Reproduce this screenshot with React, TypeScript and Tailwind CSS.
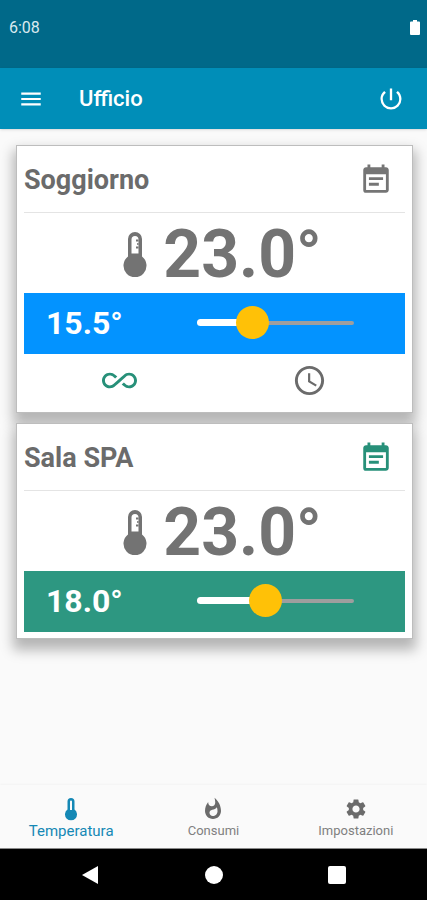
import { useState } from 'react';
import {
  MdAccessTime,
  MdAllInclusive,
  MdEventNote,
  MdMenu,
  MdPowerSettingsNew,
  MdSettings,
  MdWhatshot,
} from 'react-icons/md';

const MIN_TEMP = 5;
const MAX_TEMP = 35;

type Room = {
  id: string;
  name: string;
  current: number;
  target: number;
  scheduled: boolean;
};

const rooms: Room[] = [
  { id: 'soggiorno', name: 'Soggiorno', current: 23, target: 15.5, scheduled: false },
  { id: 'sala-spa', name: 'Sala SPA', current: 23, target: 18, scheduled: true },
];

function RoomThermometer() {
  return (
    <svg viewBox="0 0 24 46" className="h-[46px] w-6 text-[#737373]" fill="currentColor" aria-hidden="true">
      <path
        fillRule="evenodd"
        d="M5 7a7 7 0 0 1 14 0V24.500a11.500 11.500 0 1 1-14 0zM8.500 7.500V21.500h7V7.500a3.500 3.500 0 0 0-7 0z"
      />
      <path d="M13 7.500h2.500v2H13zM13 14.500h2.500v2H13zM14.200 11h1.300v2h-1.300z" />
    </svg>
  );
}

function TabThermometer() {
  return (
    <svg viewBox="0 0 24 24" className="h-6 w-6" fill="currentColor" aria-hidden="true">
      <path
        fillRule="evenodd"
        d="M8.500 4.500a3.500 3.500 0 0 1 7 0v8a6 6 0 1 1-7 0zM11 4.500V13h2V4.500a1 1 0 0 0-2 0z"
      />
    </svg>
  );
}

function RoomCard({ room }: { room: Room }) {
  const [target, setTarget] = useState(room.target);
  const filled = ((target - MIN_TEMP) / (MAX_TEMP - MIN_TEMP)) * 100;

  return (
    <section className="border border-[#bdbdbd] bg-white px-[7px] pb-1.5 shadow-[0_8px_12px_3px_rgba(0,0,0,0.28)]">
      <div className="flex h-[67px] items-center justify-between border-b border-[#e4e4e4] pr-3 pt-0.5">
        <h2 className="text-[27px] font-bold leading-8 text-[#6b6b6b]">{room.name}</h2>
        <button
          type="button"
          aria-label="Programma"
          className={room.scheduled ? 'text-[#279079]' : 'text-[#757575]'}
        >
          <MdEventNote className="h-[34px] w-[34px]" />
        </button>
      </div>

      <div className="flex h-20 items-center justify-center gap-4 pl-4 pt-1">
        <RoomThermometer />
        <span className="text-[66px] font-bold leading-none text-[#737373]">{room.current.toFixed(1)}°</span>
      </div>

      <div className={`flex h-[61px] items-center justify-between pb-0.5 pl-[22px] pr-[35px] ${room.scheduled ? 'bg-[#2d9781]' : 'bg-[#0393ff]'}`}>
        <output htmlFor={room.id} className="text-[32px] font-bold leading-10 text-white">
          {target.toFixed(1)}°
        </output>
        <div className="relative flex h-9 w-7/12 items-center px-4">
          <div className="flex h-1 flex-1 items-center rounded-full bg-[#9e9e9e]">
            <div className="h-[7px] rounded-full bg-white" style={{ width: `${filled}%` }} />
          </div>
          <input
            id={room.id}
            type="range"
            aria-label={`Temperatura ${room.name}`}
            min={MIN_TEMP}
            max={MAX_TEMP}
            step={0.5}
            value={target}
            onChange={(e) => setTarget(Number(e.target.value))}
            className="absolute inset-0 h-full w-full cursor-pointer appearance-none bg-transparent [&::-webkit-slider-thumb]:h-[33px] [&::-webkit-slider-thumb]:w-[33px] [&::-webkit-slider-thumb]:appearance-none [&::-webkit-slider-thumb]:rounded-full [&::-webkit-slider-thumb]:bg-[#ffc107]"
          />
        </div>
      </div>

      {!room.scheduled && (
        <div className="flex h-[52px] items-center">
          <div className="flex flex-1 justify-center">
            <button type="button" aria-label="Sempre attivo" className="text-[#279079]">
              <MdAllInclusive className="h-[35px] w-[35px]" />
            </button>
          </div>
          <div className="flex flex-1 justify-center">
            <button type="button" aria-label="Timer" className="text-[#6b6b6b]">
              <MdAccessTime className="h-[35px] w-[35px]" />
            </button>
          </div>
        </div>
      )}
    </section>
  );
}

export default function App() {
  return (
    <div className="flex min-h-screen flex-col bg-[#fafafa] font-['Roboto',sans-serif]">
      {/* Status bar */}
      <div className="flex h-[68px] items-start justify-between bg-[#006989] pl-[9px] pr-[7px] pt-[18px] text-white">
        <span className="text-base leading-5 text-[#d9eaf0]">6:08</span>
        <svg viewBox="0 0 10 15" className="mt-0.5 h-[15px] w-2.5" fill="currentColor" aria-hidden="true">
          <path d="M3 0h4v1.500h2a1 1 0 0 1 1 1V14a1 1 0 0 1-1 1H1a1 1 0 0 1-1-1V2.500a1 1 0 0 1 1-1h2z" />
        </svg>
      </div>

      {/* App bar */}
      <header className="flex h-[61px] items-center bg-[#008eb8] pl-[18px] pr-[22px] text-white shadow-sm">
        <button type="button" aria-label="Menu">
          <MdMenu className="h-[26px] w-[26px]" />
        </button>
        <h1 className="ml-[35px] flex-1 text-[22px] font-medium leading-7">Ufficio</h1>
        <button type="button" aria-label="Spegni">
          <MdPowerSettingsNew className="h-7 w-7" />
        </button>
      </header>

      <main className="flex flex-1 flex-col gap-2.5 pl-4 pr-3.5 pt-4">
        {rooms.map((room) => (
          <RoomCard key={room.id} room={room} />
        ))}
      </main>

      {/* Tabs */}
      <nav className="grid h-16 grid-cols-3 border-b border-[#8a8a8a] pt-3 text-[#6b6b6b] shadow-[0_-1px_2px_rgba(0,0,0,0.03)]">
        <a href="#temperatura" className="flex flex-col items-center text-[#1588b5]">
          <TabThermometer />
          <span className="text-[15px] leading-5">Temperatura</span>
        </a>
        <a href="#consumi" className="flex flex-col items-center">
          <MdWhatshot className="h-6 w-6" />
          <span className="text-[13px] leading-5 text-[#808080]">Consumi</span>
        </a>
        <a href="#impostazioni" className="flex flex-col items-center">
          <MdSettings className="h-6 w-6" />
          <span className="text-[13px] leading-5 text-[#808080]">Impostazioni</span>
        </a>
      </nav>

      {/* System buttons */}
      <div className="flex h-[51px] items-center justify-center gap-[105px] bg-black text-white">
        <button type="button" aria-label="Indietro">
          <svg viewBox="0 0 18 18" className="h-[18px] w-[18px]" fill="currentColor">
            <path d="M16 0v18L0 9z" />
          </svg>
        </button>
        <button type="button" aria-label="Home" className="h-[18px] w-[18px] rounded-full bg-white" />
        <button type="button" aria-label="Recenti" className="h-[18px] w-[18px] rounded-xs bg-white" />
      </div>
    </div>
  );
}
